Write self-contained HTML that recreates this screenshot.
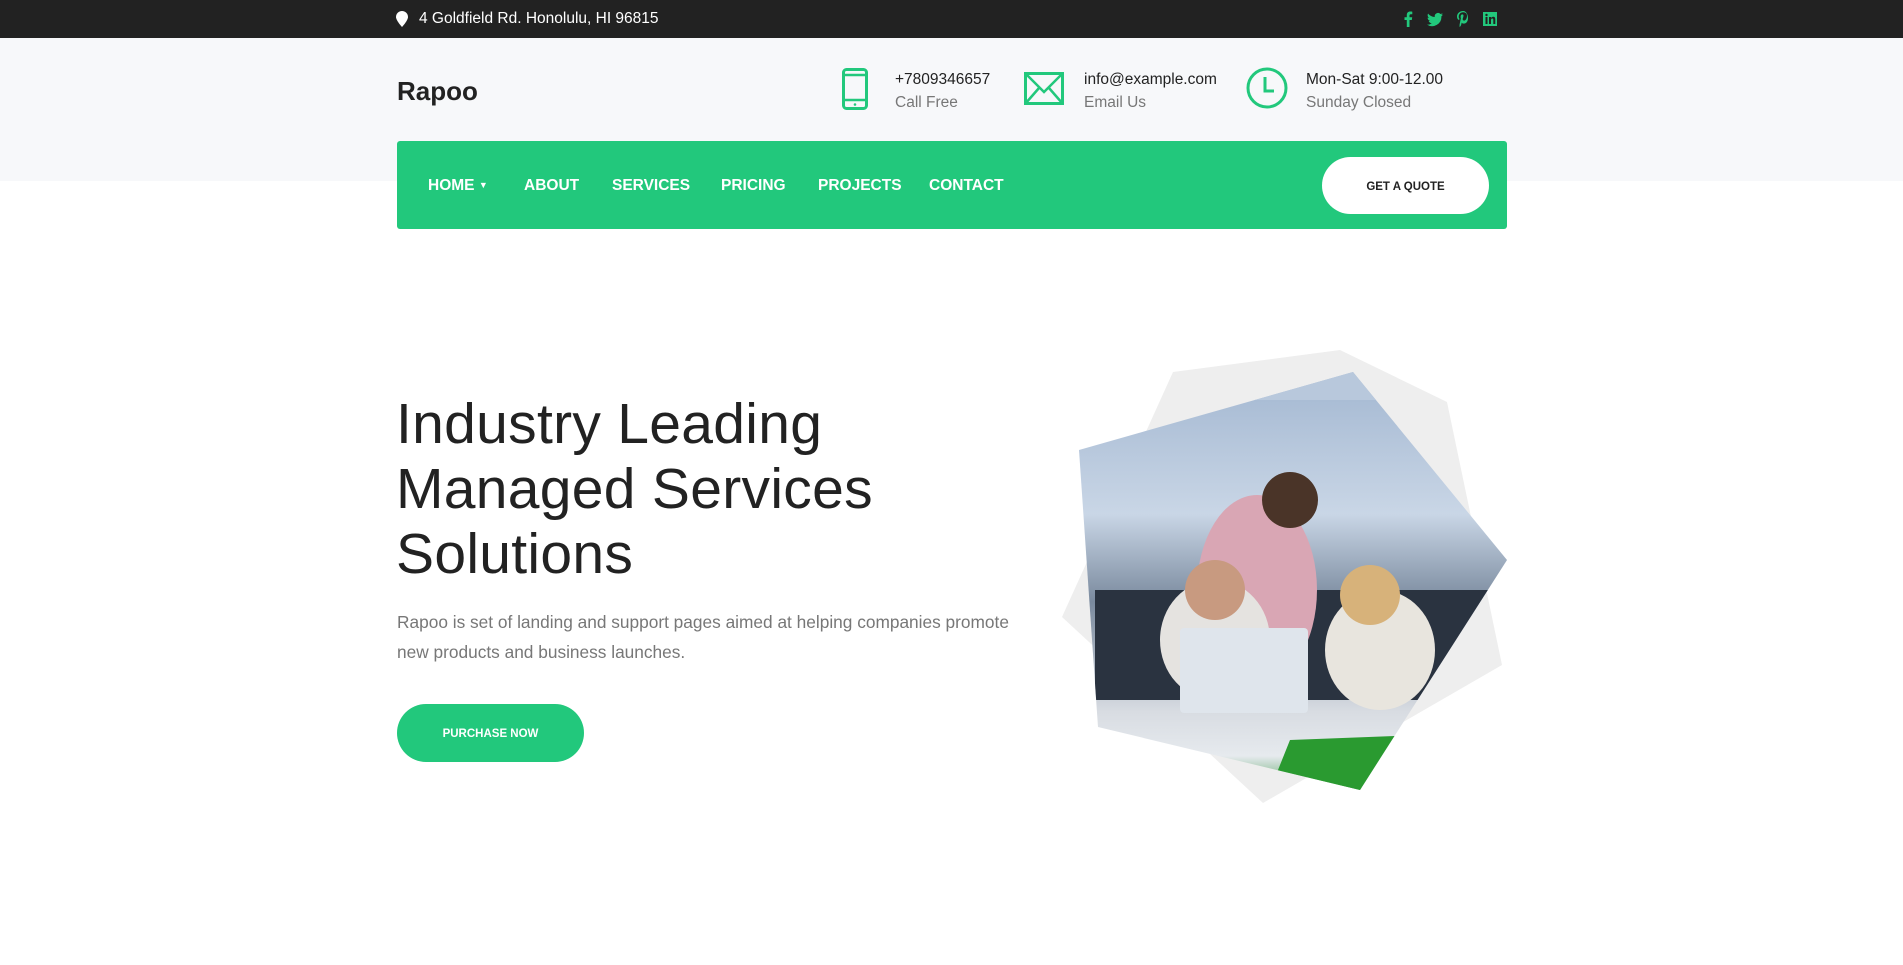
<!DOCTYPE html>
<html><head><meta charset="utf-8"><style>
*{margin:0;padding:0;box-sizing:border-box}
body{width:1903px;height:965px;overflow:hidden;background:#fff;font-family:"Liberation Sans",sans-serif;position:relative}
.top{position:absolute;left:0;top:0;width:1903px;height:38px;background:#222;color:#fff;font-size:15.5px}
.top .addr{position:absolute;left:397px;top:10px}
.top .soc{position:absolute;left:1403px;top:11px;display:flex;gap:14px}
.hdr{position:absolute;left:0;top:38px;width:1903px;height:143px;background:#f7f8fa}
.logo{position:absolute;left:397px;top:76px;font-size:26px;font-weight:bold;color:#222}
.info{position:absolute;top:68px;font-size:15.5px;color:#222;line-height:23px}
.info span{color:#777}
.nav{position:absolute;left:397px;top:141px;width:1110px;height:88px;background:#22c87c;border-radius:3px}
.nav a{position:absolute;top:36px;color:#fff;font-size:15.5px;font-weight:bold;text-decoration:none}
.quote{position:absolute;left:925px;top:16px;width:167px;height:57px;background:#fff;border-radius:29px;font-size:11.5px;font-weight:bold;color:#222;text-align:center;line-height:60px}
h1{position:absolute;left:396px;top:392px;font-size:57px;font-weight:normal;line-height:65px;color:#222;letter-spacing:0.3px}
p{position:absolute;left:397px;top:607px;width:640px;font-size:17.3px;line-height:30px;color:#777}
.btn{position:absolute;left:397px;top:704px;width:187px;height:58px;border-radius:29px;background:#22c87c;color:#fff;font-size:11.5px;font-weight:bold;text-align:center;line-height:60px}
</style></head><body>
<div class="top"><div class="addr"><svg width="12" height="16" viewBox="0 0 12 16" style="position:absolute;left:-1px;top:1px"><path d="M6 0C2.7 0 0 2.6 0 6c0 3.5 6 10 6 10s6-6.5 6-10C12 2.6 9.3 0 6 0z" fill="#fff"/></svg><span style="margin-left:22px">4 Goldfield Rd. Honolulu, HI 96815</span></div>
<div class="soc">
<svg width="10" height="16" viewBox="0 0 10 16"><path d="M6.5 16V9h2.3l.4-2.8H6.5V4.5c0-.8.3-1.3 1.4-1.3H9.3V.7C9 .6 8.2.5 7.2.5 5.2.5 3.8 1.7 3.8 4v2.2H1.5V9h2.3v7z" fill="#22c87c"/></svg>
<svg width="16" height="16" viewBox="0 0 16 16"><path d="M16 3.5c-.6.3-1.2.4-1.9.5.7-.4 1.2-1 1.4-1.8-.6.4-1.300.6-2.1.8A3.3 3.3 0 0 0 7.8 6C5.1 5.8 2.7 4.6 1.1 2.6c-.9 1.5-.4 3.4 1 4.4-.5 0-1-.2-1.5-.4 0 1.6 1.1 3 2.6 3.3-.5.1-1 .2-1.5.1.4 1.3 1.7 2.3 3.1 2.3A6.6 6.6 0 0 1 0 13.6 9.3 9.3 0 0 0 14.4 5.3c.6-.5 1.2-1.1 1.6-1.8z" fill="#22c87c"/></svg>
<svg width="12" height="16" viewBox="0 0 12 16"><path d="M6.3 0C2 0 0 3 0 5.5c0 1.5.6 2.9 1.8 3.4.2.1.4 0 .4-.2l.2-.7c.1-.2 0-.3-.1-.5-.4-.4-.6-1-.6-1.8 0-2.3 1.7-4.4 4.5-4.4 2.5 0 3.8 1.5 3.8 3.500 0 2.6-1.2 4.8-2.9 4.8-.9 0-1.6-.8-1.400-1.700.3-1.200.8-2.400.8-3.200 0-.7-.4-1.300-1.200-1.300-1 0-1.700 1-1.700 2.300 0 .8.3 1.400.3 1.400L2.7 13c-.3 1.400 0 3 0 3h.2s1-1.300 1.300-2.400l.5-2c.3.5 1.100 1 2 1 2.600 0 4.300-2.300 4.300-5.500C11 3.500 9.100 0 6.300 0z" fill="#22c87c"/></svg>
<svg width="14" height="16" viewBox="0 0 14 16"><rect x="0" y="1" width="14" height="14" fill="#22c87c"/><rect x="2.5" y="6" width="2" height="7" fill="#222"/><circle cx="3.5" cy="4" r="1.2" fill="#222"/><path d="M6 6h2v1c.4-.7 1.2-1.2 2.2-1.2 1.6 0 2.1 1 2.1 2.7V13h-2V9c0-.9-.2-1.5-1-1.5S8 8.1 8 9v4H6z" fill="#222"/></svg>
</div></div>
<div class="hdr"></div>
<div class="logo">Rapoo</div>
<svg style="position:absolute;left:842px;top:68px" width="26" height="42" viewBox="0 0 26 42"><rect x="1.5" y="1.5" width="23" height="39" rx="3" fill="none" stroke="#22c87c" stroke-width="3"/><line x1="1.5" y1="7" x2="24.5" y2="7" stroke="#22c87c" stroke-width="2.5"/><line x1="1.5" y1="32" x2="24.5" y2="32" stroke="#22c87c" stroke-width="2.5"/><circle cx="13" cy="36.5" r="1.3" fill="#22c87c"/></svg>
<div class="info" style="left:895px">+7809346657<br><span>Call Free</span></div>
<svg style="position:absolute;left:1024px;top:72px" width="40" height="33" viewBox="0 0 40 33"><rect x="1.5" y="1.5" width="37" height="30" fill="none" stroke="#22c87c" stroke-width="3"/><path d="M1.5 1.5L20 20 38.5 1.5M1.5 31.5L15 16M38.5 31.5L25 16" fill="none" stroke="#22c87c" stroke-width="2.5"/></svg>
<div class="info" style="left:1084px">info@example.com<br><span>Email Us</span></div>
<svg style="position:absolute;left:1246px;top:67px" width="42" height="42" viewBox="0 0 42 42"><circle cx="21" cy="21" r="19" fill="none" stroke="#22c87c" stroke-width="3"/><path d="M19 10v14h9" fill="none" stroke="#22c87c" stroke-width="3"/></svg>
<div class="info" style="left:1306px">Mon-Sat 9:00-12.00<br><span>Sunday Closed</span></div>
<div class="nav">
<a style="left:31px">HOME <span style="font-size:9px;vertical-align:2px">▼</span></a>
<a style="left:127px">ABOUT</a>
<a style="left:215px">SERVICES</a>
<a style="left:324px">PRICING</a>
<a style="left:421px">PROJECTS</a>
<a style="left:532px">CONTACT</a>
<div class="quote">GET A QUOTE</div>
</div>
<h1>Industry Leading<br>Managed Services<br>Solutions</h1>
<p>Rapoo is set of landing and support pages aimed at helping companies promote new products and business launches.</p>
<div class="btn">PURCHASE NOW</div>
<svg style="position:absolute;left:0;top:0" width="1903" height="965" viewBox="0 0 1903 965">
<defs>
<linearGradient id="g1" x1="0" y1="0" x2="0" y2="1"><stop offset="0" stop-color="#9fb4cf"/><stop offset="0.35" stop-color="#c9d6e6"/><stop offset="0.55" stop-color="#7a8a9e"/><stop offset="0.8" stop-color="#d8dce2"/><stop offset="0.9" stop-color="#e6eaee"/><stop offset="1" stop-color="#2f8f3a"/></linearGradient>
<clipPath id="cp"><polygon points="1079,450 1353,372 1507,560 1360,790 1098,727"/></clipPath>
</defs>
<polygon points="1173,372 1340,350 1447,402 1502,665 1263,803 1062,617" fill="#eeeeee"/>
<g clip-path="url(#cp)">
<rect x="1070" y="360" width="450" height="440" fill="url(#g1)"/>
<rect x="1095" y="590" width="420" height="110" fill="#2a3340"/>
<ellipse cx="1257" cy="590" rx="60" ry="95" fill="#d9a6b4"/>
<circle cx="1290" cy="500" r="28" fill="#4a3428"/>
<ellipse cx="1215" cy="640" rx="55" ry="60" fill="#e5e3e0"/>
<circle cx="1215" cy="590" r="30" fill="#c89a80"/>
<ellipse cx="1380" cy="650" rx="55" ry="60" fill="#e8e5de"/>
<circle cx="1370" cy="595" r="30" fill="#d7b27a"/>
<rect x="1180" y="628" width="128" height="85" rx="4" fill="#dfe5ec"/>
<polygon points="1290,740 1420,735 1370,800 1270,790" fill="#2a9a30"/>
<rect x="1080" y="360" width="450" height="40" fill="#b8c8dc"/>
</g>
</svg>
</body></html>
